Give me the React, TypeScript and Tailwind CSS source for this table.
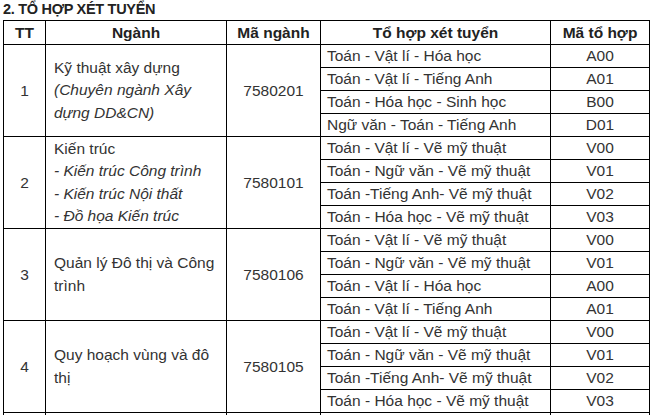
import React from "react";

type Group = {
  tt: string;
  nganh: React.ReactNode;
  ma: string;
  combos: [string, string][];
};

const groups: Group[] = [
  {
    tt: "1",
    nganh: (
      <>
        Kỹ thuật xây dựng
        <br />
        <em>(Chuyên ngành Xây dựng DD&amp;CN)</em>
      </>
    ),
    ma: "7580201",
    combos: [
      ["Toán - Vật lí - Hóa học", "A00"],
      ["Toán - Vật lí - Tiếng Anh", "A01"],
      ["Toán - Hóa học - Sinh học", "B00"],
      ["Ngữ văn - Toán - Tiếng Anh", "D01"],
    ],
  },
  {
    tt: "2",
    nganh: (
      <>
        Kiến trúc
        <br />
        <em>- Kiến trúc Công trình</em>
        <br />
        <em>- Kiến trúc Nội thất</em>
        <br />
        <em>- Đồ họa Kiến trúc</em>
      </>
    ),
    ma: "7580101",
    combos: [
      ["Toán - Vật lí - Vẽ mỹ thuật", "V00"],
      ["Toán - Ngữ văn - Vẽ mỹ thuật", "V01"],
      ["Toán -Tiếng Anh- Vẽ mỹ thuật", "V02"],
      ["Toán - Hóa học - Vẽ mỹ thuật", "V03"],
    ],
  },
  {
    tt: "3",
    nganh: <>Quản lý Đô thị và Công trình</>,
    ma: "7580106",
    combos: [
      ["Toán - Vật lí - Vẽ mỹ thuật", "V00"],
      ["Toán - Ngữ văn - Vẽ mỹ thuật", "V01"],
      ["Toán - Vật lí - Hóa học", "A00"],
      ["Toán - Vật lí - Tiếng Anh", "A01"],
    ],
  },
  {
    tt: "4",
    nganh: <>Quy hoạch vùng và đô thị</>,
    ma: "7580105",
    combos: [
      ["Toán - Vật lí - Vẽ mỹ thuật", "V00"],
      ["Toán - Ngữ văn - Vẽ mỹ thuật", "V01"],
      ["Toán -Tiếng Anh- Vẽ mỹ thuật", "V02"],
      ["Toán - Hóa học - Vẽ mỹ thuật", "V03"],
    ],
  },
];

const cell = "border border-black p-0 align-middle";

export default function App() {
  return (
    <div
      className="h-[415px] w-[660px] overflow-hidden bg-white text-[#333]"
      style={{ fontFamily: '"Liberation Sans", Arial, sans-serif' }}
    >
      <h2 className="h-[20px] pl-[3px] text-[14.5px] font-bold leading-[19px] tracking-[-0.3px] text-[#222]">
        2. TỔ HỢP XÉT TUYỂN
      </h2>
      <table className="ml-[3px] w-[646px] table-fixed border-collapse text-[15.5px] leading-[22px]">
        <colgroup>
          <col className="w-[42px]" />
          <col className="w-[181px]" />
          <col className="w-[94px]" />
          <col className="w-[230px]" />
          <col className="w-[99px]" />
        </colgroup>
        <thead>
          <tr className="h-[24px] font-bold text-[#222]">
            <th className={`${cell} text-center`}>TT</th>
            <th className={`${cell} text-center`}>Ngành</th>
            <th className={`${cell} text-center`}>Mã ngành</th>
            <th className={`${cell} text-center`}>Tổ hợp xét tuyển</th>
            <th className={`${cell} text-center`}>Mã tổ hợp</th>
          </tr>
        </thead>
        <tbody>
          {groups.map((g) =>
            g.combos.map(([combo, code], i) => (
              <tr key={g.tt + i} className="h-[23px]">
                {i === 0 && (
                  <>
                    <td rowSpan={4} className={`${cell} text-center`}>
                      {g.tt}
                    </td>
                    <td rowSpan={4} className={`${cell} px-2 leading-[22.5px]`}>
                      {g.nganh}
                    </td>
                    <td rowSpan={4} className={`${cell} text-center`}>
                      {g.ma}
                    </td>
                  </>
                )}
                <td className={`${cell} whitespace-nowrap pl-[6px]`}>{combo}</td>
                <td className={`${cell} text-center`}>{code}</td>
              </tr>
            ))
          )}
          <tr className="h-[23px]">
            <td className={cell} />
            <td className={cell} />
            <td className={cell} />
            <td className={cell} />
            <td className={cell} />
          </tr>
        </tbody>
      </table>
    </div>
  );
}
